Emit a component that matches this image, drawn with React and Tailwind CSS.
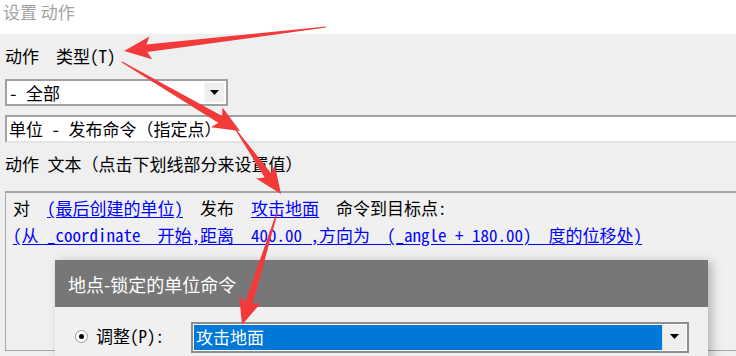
import React from 'react';

const mono = { fontFamily: '"Noto Sans Mono CJK SC", "Noto Sans CJK SC", monospace' };

// tapered red annotation arrow, thin at the tail, fat head at the tip
function arrowPoints([x1, y1], [x2, y2]) {
    const dx = x2 - x1;
    const dy = y2 - y1;
    const len = Math.hypot(dx, dy);
    const ux = dx / len;
    const uy = dy / len;
    const nx = -uy;
    const ny = ux;
    const head = 27;
    const bx = x2 - ux * head;
    const by = y2 - uy * head;
    const pt = (x, y, w) => [[x + nx * w, y + ny * w], [x - nx * w, y - ny * w]];
    const [tl, tr] = pt(x1, y1, 0.6);
    const [sl, sr] = pt(bx + ux * 4, by + uy * 4, 3.8);
    const [wl, wr] = pt(bx, by, 11.5);
    return [tl, sl, wl, [x2, y2], wr, sr, tr].map((p) => p.map((v) => v.toFixed(1)).join(',')).join(' ');
}

const arrows = [
    [[326, 27], [124, 51]],
    [[122, 62], [240, 131]],
    [[236, 130], [281, 194]],
    [[277, 213], [242, 325]],
];

function Caret() {
    return (
        <svg width="9" height="5" viewBox="0 0 9 5">
            <path d="M0 0h9L4.5 5z" fill="#000" />
        </svg>
    );
}

export default function App() {
    return (
        <div className="relative w-[736px] h-[356px] overflow-hidden bg-[#efefef] text-black whitespace-pre" style={mono}>
            <div className="h-[34px] bg-white pl-[3px] pt-[1px] text-[17px] leading-[22px] text-[#a3a3a3]" style={{ fontFamily: '"Noto Sans CJK SC", sans-serif' }}>
                设置 动作
            </div>

            <div className="pl-[5px] text-[17px]">
                <div className="mt-[12px] h-[20px] leading-[20px]">动作  类型(T)</div>

                <div className="mt-[13px] flex w-[223px] h-[27px] border-2 border-[#a0a0a0] bg-white">
                    <div className="flex-1 border border-white pl-[1px] leading-[22px]">- 全部</div>
                    <div className="w-[21px] my-[1px] mr-[1px] flex items-center justify-center bg-[#efefef] border border-[#f7f7f7]">
                        <Caret />
                    </div>
                </div>

                <div className="mt-[9px] h-[28px] w-[740px] border-t-2 border-l-2 border-[#a3a3a3] border-b-2 border-b-[#e4e4e4] bg-white pl-[2px] leading-[24px]">
                    单位 - 发布命令（指定点）
                </div>

                <div className="mt-[11px] h-[20px] leading-[20px]">动作 文本（点击下划线部分来设置值）</div>

                <div className="mt-[17px] h-[160px] w-[740px] border-t-2 border-l border-b border-[#a6a6a6] bg-[#f0f0f0] pl-[7px] pt-[5px] leading-[20px]">
                    <div>
                        对  <span className="text-[#0000ff] underline underline-offset-2">(最后创建的单位)</span>  发布  <span className="text-[#0000ff] underline underline-offset-2">攻击地面</span>  命令到目标点:
                    </div>
                    <div className="mt-[7px] text-[#0000ff] underline underline-offset-2">
                        (从 _coordinate  开始,距离  400.00 ,方向为  (_angle + 180.00)  度的位移处)
                    </div>
                </div>
            </div>

            <div className="absolute left-[55px] top-[260px] w-[653px] h-[110px] bg-[#f0f0f0] shadow-[4px_2px_10px_rgba(0,0,0,0.25)]">
                <div className="h-[47px] bg-[#777777] pl-[13px] pt-[12px] text-[18px] leading-[24px] text-white" style={{ fontFamily: '"Noto Sans CJK SC", sans-serif' }}>
                    地点-锁定的单位命令
                </div>
                <div className="flex items-start pt-[15px] pl-[20px]">
                    <div className="mt-[8px] w-[13px] h-[13px] rounded-full border border-[#9a9a9a] bg-white flex items-center justify-center">
                        <div className="w-[5px] h-[5px] rounded-full bg-black" />
                    </div>
                    <div className="ml-[8px] mt-[2px] text-[17px] leading-[24px]">调整(P):</div>
                    <div className="ml-[27px] flex w-[498px] h-[31px] border-2 border-[#8e8e8e] bg-white p-[1px]">
                        <div className="flex-1 bg-[#0078d7] text-white text-[17px] leading-[24px] pl-[2px]">攻击地面</div>
                        <div className="w-[24px] flex items-start pt-[9px] justify-center bg-[#efefef] border-l border-[#e0e0e0]">
                            <Caret />
                        </div>
                    </div>
                </div>
            </div>

            <svg className="absolute inset-0 pointer-events-none" width="736" height="356">
                {arrows.map(([a, b], i) => (
                    <polygon key={i} points={arrowPoints(a, b)} fill="#f23a3a" />
                ))}
            </svg>
        </div>
    );
}
